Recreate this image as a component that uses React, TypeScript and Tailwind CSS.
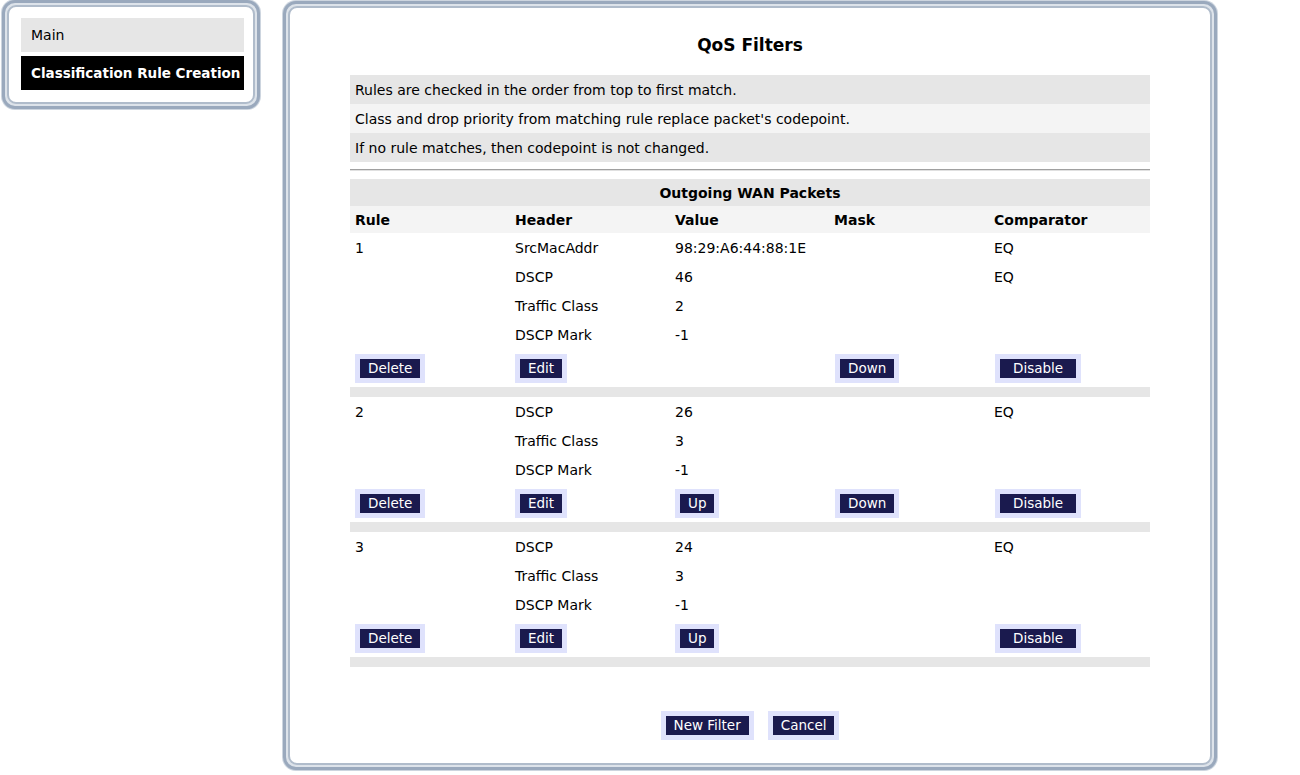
// App.tsx — QoS Filters page (classification rule list).

type Entry = { header: string; value: string; mask?: string; comparator?: string };
type Rule = { id: number; entries: Entry[]; up: boolean; down: boolean };

const rules: Rule[] = [
  {
    id: 1,
    entries: [
      { header: "SrcMacAddr", value: "98:29:A6:44:88:1E", comparator: "EQ" },
      { header: "DSCP", value: "46", comparator: "EQ" },
      { header: "Traffic Class", value: "2" },
      { header: "DSCP Mark", value: "-1" },
    ],
    up: false,
    down: true,
  },
  {
    id: 2,
    entries: [
      { header: "DSCP", value: "26", comparator: "EQ" },
      { header: "Traffic Class", value: "3" },
      { header: "DSCP Mark", value: "-1" },
    ],
    up: true,
    down: true,
  },
  {
    id: 3,
    entries: [
      { header: "DSCP", value: "24", comparator: "EQ" },
      { header: "Traffic Class", value: "3" },
      { header: "DSCP Mark", value: "-1" },
    ],
    up: true,
    down: false,
  },
];

function Frame({ className, children }: { className?: string; children: React.ReactNode }) {
  return (
    <div
      className={`rounded-[13px] border-[3px] border-[#9aa9bd] bg-[#dde3ea] p-[2px] shadow-[0_0_0_1px_#cdd5df] ${className ?? ""}`}
    >
      <div className="h-full rounded-[9px] border-2 border-[#b0bccb] bg-white">{children}</div>
    </div>
  );
}

function Btn({ label, wide }: { label: string; wide?: boolean }) {
  return (
    <span className="inline-flex bg-[#dfe2fc] p-[5px]">
      <span
        className={`flex h-[19px] items-center bg-[#1a1a4e] pt-[1px] text-[13.5px] leading-none text-white ${wide ? "px-[13px]" : "px-[8px]"}`}
      >
        {label}
      </span>
    </span>
  );
}

export default function App() {
  return (
    <div
      className="flex h-[775px] w-[1300px] items-start gap-[23px] bg-white pl-[2px] text-[14px] text-black"
      style={{ fontFamily: '"DejaVu Sans", Verdana, sans-serif' }}
    >
      <Frame className="h-[109px] w-[258px]">
        <div className="flex flex-col gap-[4px] pl-[12px] pt-[11px]">
          <div className="flex h-[34px] w-[223px] items-center bg-[#e6e6e6] pl-[10px] pt-[1px] text-[14px]">Main</div>
          <div className="flex h-[34px] w-[223px] items-center bg-black pl-[10px] pt-[1px] text-[13.5px] font-bold whitespace-nowrap text-white">
            Classification Rule Creation
          </div>
        </div>
      </Frame>

      <Frame className="mt-[1px] h-[769px] w-[934px]">
        <div className="flex flex-col items-center">
          <div className="pt-[27px] pb-[20px] text-[17px] leading-[20px] font-bold">QoS Filters</div>

          <div className="w-[800px]">
            <div className="flex h-[29px] items-center bg-[#e6e6e6] px-[5px] pt-[2px]">
              Rules are checked in the order from top to first match.
            </div>
            <div className="flex h-[29px] items-center bg-[#f4f4f4] px-[5px] pt-[2px]">
              Class and drop priority from matching rule replace packet's codepoint.
            </div>
            <div className="flex h-[29px] items-center bg-[#e6e6e6] px-[5px] pt-[2px]">
              If no rule matches, then codepoint is not changed.
            </div>

            <div className="mt-[7px] mb-[8px] border-t border-b border-t-[#a0a0a0] border-b-[#e0e0e0]" />

            <div className="flex h-[27px] items-center justify-center bg-[#e6e6e6] pt-[1px] font-bold">
              Outgoing WAN Packets
            </div>
            <div className="grid h-[27px] grid-cols-5 items-center bg-[#f4f4f4] pt-[1px] font-bold">
              <div className="px-[5px]">Rule</div>
              <div className="px-[5px]">Header</div>
              <div className="px-[5px]">Value</div>
              <div className="px-[4px]">Mask</div>
              <div className="px-[4px]">Comparator</div>
            </div>

            {rules.map((r) => (
              <div key={r.id}>
                {r.entries.map((e, i) => (
                  <div key={i} className="grid h-[29px] grid-cols-5 items-center pt-[2px]">
                    <div className="px-[5px]">{i === 0 ? r.id : ""}</div>
                    <div className="px-[5px]">{e.header}</div>
                    <div className="px-[5px]">{e.value}</div>
                    <div className="px-[4px]">{e.mask ?? ""}</div>
                    <div className="px-[4px]">{e.comparator ?? ""}</div>
                  </div>
                ))}
                <div className="grid h-[38px] grid-cols-5 items-start pt-[5px]">
                  <div className="px-[5px]">
                    <Btn label="Delete" />
                  </div>
                  <div className="px-[5px]">
                    <Btn label="Edit" />
                  </div>
                  <div className="px-[5px]">{r.up && <Btn label="Up" />}</div>
                  <div className="px-[5px]">{r.down && <Btn label="Down" />}</div>
                  <div className="px-[5px]">
                    <Btn label="Disable" wide />
                  </div>
                </div>
                <div className="h-[10px] bg-[#e6e6e6]" />
              </div>
            ))}
          </div>

          <div className="mt-[44px] flex gap-[14px]">
            <Btn label="New Filter" />
            <Btn label="Cancel" />
          </div>
        </div>
      </Frame>
    </div>
  );
}
